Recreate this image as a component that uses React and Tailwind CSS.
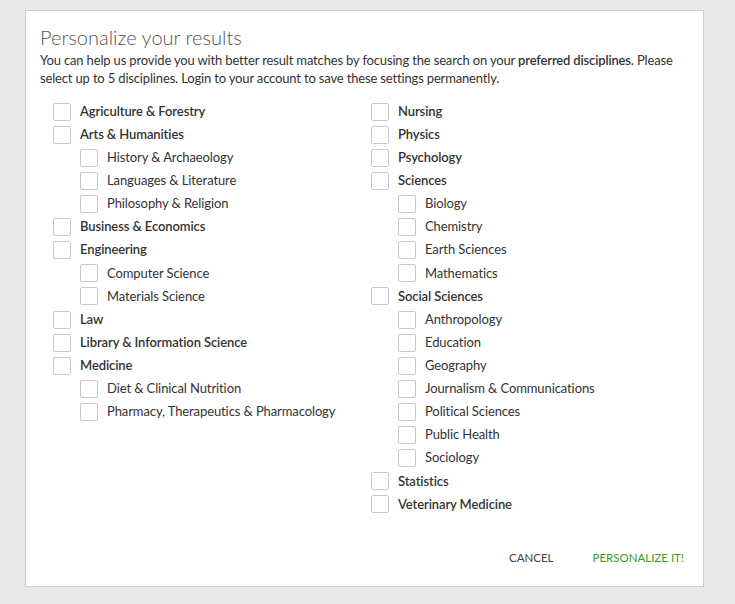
import React from "react";

const left = [
  { label: "Agriculture & Forestry" },
  { label: "Arts & Humanities", children: ["History & Archaeology", "Languages & Literature", "Philosophy & Religion"] },
  { label: "Business & Economics" },
  { label: "Engineering", children: ["Computer Science", "Materials Science"] },
  { label: "Law" },
  { label: "Library & Information Science" },
  { label: "Medicine", children: ["Diet & Clinical Nutrition", "Pharmacy, Therapeutics & Pharmacology"] },
];

const right = [
  { label: "Nursing" },
  { label: "Physics" },
  { label: "Psychology" },
  { label: "Sciences", children: ["Biology", "Chemistry", "Earth Sciences", "Mathematics"] },
  { label: "Social Sciences", children: ["Anthropology", "Education", "Geography", "Journalism & Communications", "Political Sciences", "Public Health", "Sociology"] },
  { label: "Statistics" },
  { label: "Veterinary Medicine" },
];

function Row({ label, bold, sub }) {
  return (
    <label className={`flex items-center h-[23.12px] ${sub ? "pl-[27px]" : ""}`}>
      <span className="w-[18px] h-[18px] border border-[#c8c8c8] rounded-[2px] bg-white shrink-0" />
      <span className={`ml-[9px] text-[13px] text-[#333] tracking-[-0.1px] ${bold ? "font-semibold" : ""}`}>{label}</span>
    </label>
  );
}

function Column({ items }) {
  return (
    <div className="flex flex-col pl-[13px]">
      {items.map((it) => (
        <React.Fragment key={it.label}>
          <Row label={it.label} bold />
          {it.children && it.children.map((c) => <Row key={c} label={c} sub />)}
        </React.Fragment>
      ))}
    </div>
  );
}

export default function App() {
  return (
    <div className="w-[735px] h-[604px] bg-[#e8e8e8] pt-[10px] pl-[25px]" style={{ fontFamily: "Lato, 'Open Sans', sans-serif" }}>
      <div className="w-[679px] h-[577px] bg-white border border-[#cfcfcf] pt-[14px] px-[14px] flex flex-col">
        <h1 className="text-[20px] leading-[24px] font-light text-[#555]">Personalize your results</h1>
        <p className="mt-[2px] text-[13px] leading-[18px] text-[#333] tracking-[-0.16px]">
          You can help us provide you with better result matches by focusing the search on your <b className="font-semibold">preferred disciplines</b>. Please select up to 5 disciplines. Login to your account to save these settings permanently.
        </p>
        <div className="grid grid-cols-[318px_1fr] mt-[13px]">
          <Column items={left} />
          <Column items={right} />
        </div>
        <div className="mt-auto mb-[20px] flex justify-end items-center gap-[39px] pr-[5px] text-[11.5px]">
          <button className="text-[#444]">CANCEL</button>
          <button className="text-[#3a9a28]">PERSONALIZE IT!</button>
        </div>
      </div>
    </div>
  );
}
